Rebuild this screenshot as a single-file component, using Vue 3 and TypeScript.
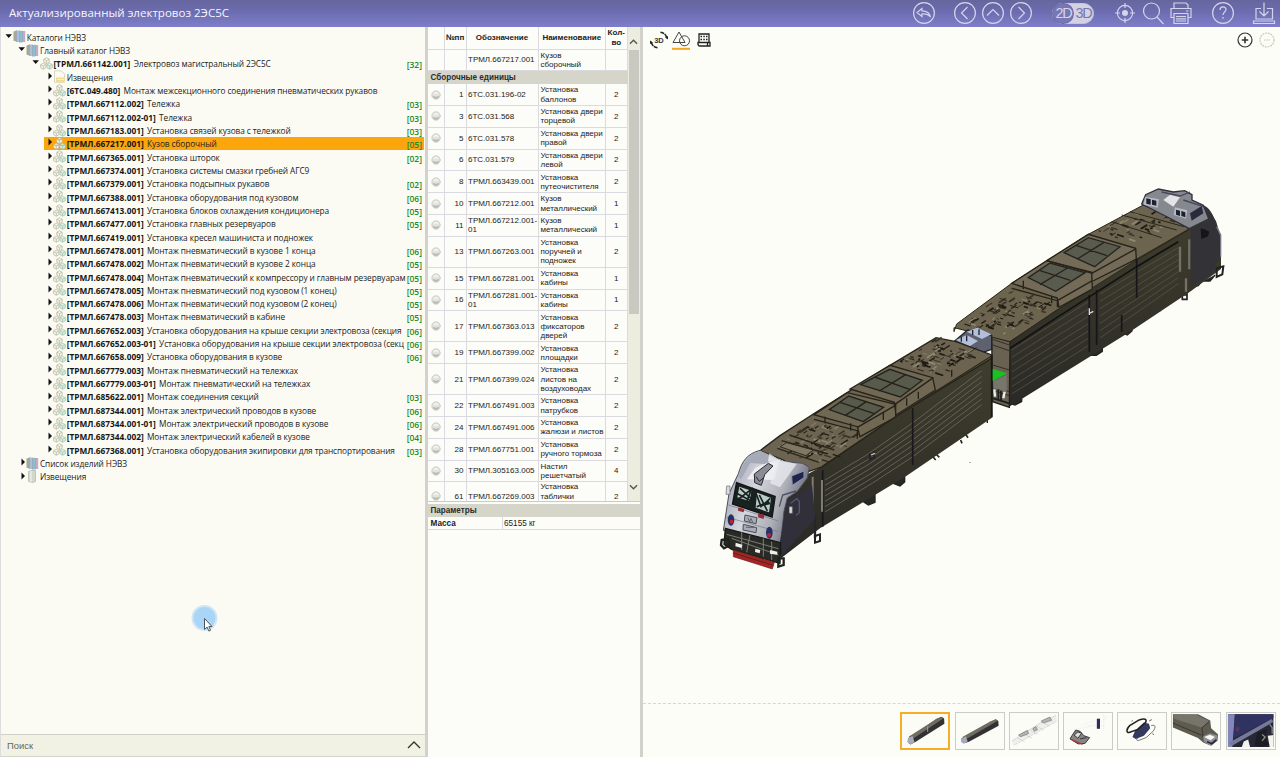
<script setup lang="ts">
type Kind = 'books' | 'cubes' | 'note' | 'book'
interface TreeRow { level: number; open?: boolean; kind: Kind; code?: string; name: string; count?: string; selected?: boolean }
interface Part { n: number; code: string; name: string; qty: number; h: number }
interface Stroke { d: string; c: string; w: number }

const leaf = (code: string, name: string, count = '', selected = false): TreeRow =>
  ({ level: 3, kind: 'cubes', code, name, count, selected })

const rows: TreeRow[] = [
  { level: 0, open: true, kind: 'books', name: 'Каталоги НЭВЗ' },
  { level: 1, open: true, kind: 'books', name: 'Главный каталог НЭВЗ' },
  { level: 2, open: true, kind: 'cubes', code: 'ТРМЛ.661142.001', name: 'Электровоз магистральный 2ЭС5С', count: '32' },
  { level: 3, kind: 'note', name: 'Извещения' },
  leaf('6ТС.049.480', 'Монтаж межсекционного соединения пневматических рукавов'),
  leaf('ТРМЛ.667112.002', 'Тележка', '03'),
  leaf('ТРМЛ.667112.002-01', 'Тележка', '03'),
  leaf('ТРМЛ.667183.001', 'Установка связей кузова с тележкой', '03'),
  leaf('ТРМЛ.667217.001', 'Кузов сборочный', '05', true),
  leaf('ТРМЛ.667365.001', 'Установка шторок', '02'),
  leaf('ТРМЛ.667374.001', 'Установка системы смазки гребней АГС9'),
  leaf('ТРМЛ.667379.001', 'Установка подсыпных рукавов', '02'),
  leaf('ТРМЛ.667388.001', 'Установка оборудования под кузовом', '06'),
  leaf('ТРМЛ.667413.001', 'Установка блоков охлаждения кондиционера', '05'),
  leaf('ТРМЛ.667477.001', 'Установка главных резервуаров', '05'),
  leaf('ТРМЛ.667419.001', 'Установка кресел машиниста и подножек'),
  leaf('ТРМЛ.667478.001', 'Монтаж пневматический в кузове 1 конца', '06'),
  leaf('ТРМЛ.667478.002', 'Монтаж пневматический в кузове 2 конца', '05'),
  leaf('ТРМЛ.667478.004', 'Монтаж пневматический к компрессору и главным резервуарам', '05'),
  leaf('ТРМЛ.667478.005', 'Монтаж пневматический под кузовом (1 конец)', '05'),
  leaf('ТРМЛ.667478.006', 'Монтаж пневматический под кузовом (2 конец)', '05'),
  leaf('ТРМЛ.667478.003', 'Монтаж пневматический в кабине', '05'),
  leaf('ТРМЛ.667652.003', 'Установка оборудования на крыше секции электровоза (секция', '06'),
  leaf('ТРМЛ.667652.003-01', 'Установка оборудования на крыше секции электровоза (секц', '06'),
  leaf('ТРМЛ.667658.009', 'Установка оборудования в кузове', '06'),
  leaf('ТРМЛ.667779.003', 'Монтаж пневматический на тележках'),
  leaf('ТРМЛ.667779.003-01', 'Монтаж пневматический на тележках'),
  leaf('ТРМЛ.685622.001', 'Монтаж соединения секций', '03'),
  leaf('ТРМЛ.687344.001', 'Монтаж электрический проводов в кузове', '06'),
  leaf('ТРМЛ.687344.001-01', 'Монтаж электрический проводов в кузове', '06'),
  leaf('ТРМЛ.687344.002', 'Монтаж электрический кабелей в кузове', '04'),
  leaf('ТРМЛ.667368.001', 'Установка оборудования экипировки для транспортирования', '03'),
  { level: 1, kind: 'books', name: 'Список изделий НЭВЗ' },
  { level: 1, kind: 'book', name: 'Извещения' },
]

const part = (n: number, code: string, name: string, qty: number, lines = 2): Part =>
  ({ n, code, name, qty, h: lines === 3 ? 31 : 21.8 })

const assembly = 'Кузов\nсборочный'
const parts: Part[] = [
  part(1, '6ТС.031.196-02', 'Установка\nбаллонов', 2),
  part(3, '6ТС.031.568', 'Установка двери\nторцевой', 2),
  part(5, '6ТС.031.578', 'Установка двери\nправой', 2),
  part(6, '6ТС.031.579', 'Установка двери\nлевой', 2),
  part(8, 'ТРМЛ.663439.001', 'Установка\nпутеочистителя', 2),
  part(10, 'ТРМЛ.667212.001', 'Кузов\nметаллический', 1),
  part(11, 'ТРМЛ.667212.001-\n01', 'Кузов\nметаллический', 1),
  part(13, 'ТРМЛ.667263.001', 'Установка\nпоручней и\nподножек', 2, 3),
  part(15, 'ТРМЛ.667281.001', 'Установка\nкабины', 1),
  part(16, 'ТРМЛ.667281.001-\n01', 'Установка\nкабины', 1),
  part(17, 'ТРМЛ.667363.013', 'Установка\nфиксаторов\nдверей', 2, 3),
  part(19, 'ТРМЛ.667399.002', 'Установка\nплощадки', 2),
  part(21, 'ТРМЛ.667399.024', 'Установка\nлистов на\nвоздуховодах', 2, 3),
  part(22, 'ТРМЛ.667491.003', 'Установка\nпатрубков', 2),
  part(24, 'ТРМЛ.667491.006', 'Установка\nжалюзи и листов', 2),
  part(28, 'ТРМЛ.667751.001', 'Установка\nручного тормоза', 2),
  part(30, 'ТРМЛ.305163.005', 'Настил\nрешетчатый', 4),
  { ...part(61, 'ТРМЛ.667269.003', 'Установка\nтаблички\n\u00a0', 2), h: 28 },
]

// Small fittings scattered over a slanted roof area spanned by two edge vectors.
function fittings(o: number[], u: number[], v: number[], count: number, seed: number): Stroke[] {
  let s = seed
  const rnd = () => (s = (s * 16807) % 2147483647) / 2147483647
  const out: Stroke[] = []
  const colors = ['#1d1b14', '#292619', '#3a3527', '#8f8873', '#1d1b14']
  for (let i = 0; i < count; i++) {
    const a = rnd(), b = rnd()
    const x = o[0] + u[0] * a + v[0] * b
    const y = o[1] + u[1] * a + v[1] * b
    const along = rnd() > 0.45
    const len = 6 + rnd() * 20
    const dx = along ? len * 0.84 : len * 0.94
    const dy = along ? -len * 0.54 : len * 0.3
    out.push({ d: `M${x.toFixed(1)} ${y.toFixed(1)}l${dx.toFixed(1)} ${dy.toFixed(1)}`, c: colors[Math.floor(rnd() * 5)], w: 2 + rnd() * 4 })
  }
  return out
}
const frontRoof = [
  ...fittings([215, 385], [125, -80], [140, 48], 85, 71),
  ...fittings([590, 130], [110, -70], [125, 35], 85, 19),
]
const rearRoof = [
  ...fittings([95, 430], [140, -95], [130, 38], 95, 33),
  ...fittings([500, 155], [130, -75], [110, 32], 45, 57),
]
const ribs = [0, 1, 2, 3, 4, 5, 6]
</script>

<template>
  <div class="app">
    <header class="top">
      <h1>Актуализированный электровоз 2ЭС5С</h1>
      <nav class="tools">
        <svg class="ic" viewBox="0 0 24 24"><circle cx="12" cy="12" r="10.4" /><path d="M10 7.500 5 11.500l5 4v-2.600c4-.400 6.500.600 8.500 3.100-.800-4-3.800-6.100-8.500-6.200z" /></svg>
        <svg class="ic g17" viewBox="0 0 24 24"><circle cx="12" cy="12" r="10.4" /><path d="m14.500 6-6 6 6 6" /></svg>
        <svg class="ic g4" viewBox="0 0 24 24"><circle cx="12" cy="12" r="10.4" /><path d="m6 14.500 6-6 6 6" /></svg>
        <svg class="ic g4" viewBox="0 0 24 24"><circle cx="12" cy="12" r="10.4" /><path d="m9.500 6 6 6-6 6" /></svg>
        <div class="toggle"><span class="two">2D</span><span class="three">3D</span></div>
        <svg class="ic g19" viewBox="0 0 24 24"><circle cx="12" cy="12" r="7.600" /><circle cx="12" cy="12" r="3" fill="#d4d4ea" stroke="none" /><path d="M12 2v5M12 17v5M2 12h5M17 12h5" /></svg>
        <svg class="ic g4" viewBox="0 0 24 24"><circle cx="10.500" cy="10" r="8" /><path d="m16 16 6.500 7" /></svg>
        <svg class="ic g4" viewBox="0 0 24 24"><path d="M5 7.500V2h12l2 2v3.500M5 16.500H2v-9h20v9h-3M5 12.500h14v10H5zM7 15.500h10M7 17.800h10M7 20h10M17 10h2.500" /></svg>
        <svg class="ic g17" viewBox="0 0 24 24"><circle cx="12" cy="12" r="10.4" /><path d="M9 9c0-4 6-4 6-.500 0 2.500-3 2.500-3 5.500M12 16v1.800" /></svg>
        <svg class="ic g17" viewBox="0 0 24 24"><path d="M9 7.500H4V18h16.500V7.500H15M12 1.500v13M7.500 10.500l4.500 4.500 4.500-4.500M1.500 20h21v2.500h-21z" /></svg>
      </nav>
    </header>

    <main class="body">
      <section class="left">
        <ul class="tree">
          <li v-for="(r, i) in rows" :key="i" class="row" :class="['l' + r.level, { sel: r.selected }]">
            <svg class="arrow" viewBox="0 0 9 10"><path :d="r.open ? 'M1.500 2.200h6.500L4.700 5.900z' : 'M4.500.500v7L8 4z'" /></svg>
            <svg v-if="r.kind === 'cubes'" class="kind" viewBox="0 0 13 13" fill="#f5f5e2" stroke="#b4b69f" stroke-width=".7">
              <path d="m6.500.700 2.700 1.500v3L6.500 6.700 3.800 5.200v-3zM3.800 2.200l2.700 1.300 2.700-1.300M6.500 3.500v3" />
              <path d="m3.300 6.200 2.700 1.500v3l-2.700 1.600L.6 10.700v-3zM.6 7.700 3.300 9 6 7.700M3.300 9v3" />
              <path d="m9.600 6.200 2.700 1.500v3l-2.700 1.600-2.700-1.600v-3zM6.900 7.700 9.600 9l2.700-1.300M9.600 9v3" fill="#d9efdf" stroke="#9cc0af" />
            </svg>
            <svg v-else-if="r.kind === 'books'" class="kind" viewBox="0 0 13 13">
              <path d="M.5 1.500 3.500.500v11l-3-.800z" fill="#a6a893" /><path d="M3.500.500h3v11.500h-3z" fill="#a9bfdc" /><path d="M6.500.800h3V12.500h-3z" fill="#85c3cc" /><path d="M9.500 1h2.700v11H9.500z" fill="#c7a9d0" /><path d="M3.500.500v11.500M6.500.800v11.700M9.500 1v11" stroke="#84879a" stroke-width=".5" />
            </svg>
            <svg v-else-if="r.kind === 'note'" class="kind" viewBox="0 0 13 13"><path d="M1.500.800h6.500l3.500 3v8.400h-10z" fill="#fbfaf0" stroke="#c5c5b7" stroke-width=".7" /><path d="M3 7.500h9v4.700H3z" fill="#f3dc8d" /><path d="M4 9.500h7" stroke="#fff8d0" stroke-width=".7" /></svg>
            <svg v-else class="kind" viewBox="0 0 13 13"><path d="M2.500 1.500 5 .5h4.500v11L7 12.500l-4.500-1z" fill="#d1d9cc" stroke="#a8ada2" stroke-width=".6" /><path d="M5 1v11" stroke="#fff" stroke-width=".8" /></svg>
            <span class="label"><b v-if="r.code">[{{ r.code }}]</b>{{ r.name }}</span>
            <span v-if="r.count" class="count">[{{ r.count }}]</span>
          </li>
        </ul>
        <div class="search"><span>Поиск</span><svg viewBox="0 0 14 8"><path d="m1 7 6-6 6 6" /></svg></div>
        <svg class="pointer" viewBox="0 0 28 28">
          <circle cx="13.500" cy="14" r="13" fill="#cfe6f3" /><circle cx="13.500" cy="14" r="11" fill="#abd5f6" />
          <path d="M13.500 14.500v11l2.600-2.400 1.800 4 1.700-.800-1.800-3.700h3.300z" fill="#fff" stroke="#3e4450" stroke-width=".9" />
        </svg>
      </section>

      <section class="mid">
        <div class="spec">
          <div class="grid">
            <div class="tr head"><span /><span>№пп</span><span>Обозначение</span><span>Наименование</span><span>Кол-<br>во</span></div>
            <div class="tr first"><span /><span /><span class="code">ТРМЛ.667217.001</span><span class="name">{{ assembly }}</span><span /></div>
            <div class="group">Сборочные единицы</div>
            <div v-for="p in parts" :key="p.n" class="tr" :style="{ height: p.h + 'px' }">
              <span class="gearcell"><svg viewBox="0 0 10 10"><circle cx="5" cy="5" r="4.200" fill="#e4e3dc" stroke="#bdbdb9" stroke-width=".9" stroke-dasharray="1.500 .700" /><path d="M1.500 5.500C3 7 7 7 8.500 5.500 8 8 6.500 8.800 5 8.800S2 8 1.500 5.500z" fill="#b9b9b7" /><path d="M2.800 3.500 5 2.500l2.200 1" stroke="#fff" fill="none" /></svg></span>
              <span class="num">{{ p.n }}</span><span class="code">{{ p.code }}</span><span class="name">{{ p.name }}</span><span class="qty">{{ p.qty }}</span>
            </div>
          </div>
          <div class="scroll">
            <svg viewBox="0 0 10 6"><path d="m1 5 4-4 4 4" /></svg>
            <i />
            <svg viewBox="0 0 10 6"><path d="m1 1 4 4 4-4" /></svg>
          </div>
        </div>
        <div class="params">
          <div class="group">Параметры</div>
          <div class="mass"><b>Масса</b><span>65155 кг</span></div>
        </div>
      </section>

      <section class="view">
        <div class="viewbar">
          <svg class="v1" viewBox="0 0 18 18"><path d="M10.500 1.200c3.500.600 5.600 2.600 6.300 6M7.500 16.800c-3.500-.600-5.600-2.600-6.300-6" fill="none" stroke="#222" stroke-width="1.500" stroke-dasharray="3.800 .700" /><path d="m15 6.500 3 2V5zM3 11.500l-3-2V13z" fill="#222" /><text x="9" y="11.700" text-anchor="middle">3D</text></svg>
          <svg class="v2" viewBox="0 0 18 20"><path d="M1 11.500 7 1l6 10.500z" /><circle cx="12.500" cy="9.800" r="5" /><path class="under" d="M0 17.800h18" /></svg>
          <svg class="v3" viewBox="0 0 14 14"><path d="M2 9.500V1h10v8.500M1 9.500h9.500V13H2.500C1 13 .8 11 1 9.500zM10.500 9.500H13V13h-2.500M3.500 3.500H5M6.300 3.500h1.500M9 3.500h1.500M3.500 6.500H5M6.300 6.500h1.500M9 6.500h1.500" /></svg>
          <div class="zoomers">
            <svg viewBox="0 0 16 16"><circle cx="8" cy="8" r="7" /><path d="M4.800 8h6.400M8 4.800v6.400" stroke-width="1.600" /></svg>
            <svg class="off" viewBox="0 0 16 16"><circle cx="8" cy="8" r="7" stroke-dasharray="2 .800" /><path d="M5 8h6" stroke-dasharray="1.500 .700" /></svg>
          </div>
        </div>

        <svg class="scene" viewBox="643 54 637 649">
          <defs>
            <linearGradient id="side" x1="0" y1="0" x2="0" y2="1"><stop offset="0" stop-color="#403e2d" /><stop offset="1" stop-color="#2a2926" /></linearGradient>
            <linearGradient id="cab" x1="0" y1="0" x2="1" y2=".4"><stop offset="0" stop-color="#8f93a0" /><stop offset=".45" stop-color="#d5d7de" /><stop offset=".75" stop-color="#aeb0b8" /><stop offset="1" stop-color="#68697a" /></linearGradient>
          </defs>

          <g transform="translate(930 180) scale(.33333)">
            <path d="M570 445v22l12-6 10 4 14-12v-20M485 508v18h14l18-12v-22M240 670l15 5 20-10v-25M690 382v12M785 320l20-3 10-14 25 0 15-18" fill="#2a2926" stroke="#222" stroke-width="4" />
            <path d="M757 330v28h14v-32M757 345h14" fill="none" stroke="#222" stroke-width="5" />
            <path d="m240 485 145-100 235-148 155-92 5-25 50-35 28 38 15 50v94l-93 68-180 120-365 227z" fill="url(#side)" />
            <path d="m185 468 55 17-2 197-50-17z" fill="#696152" stroke="#211f1a" stroke-width="4" />
            <path d="M188 478l50 17M188 495l50 17M188 555l50 15M190 620l48 15M190 632l48 15" stroke="#332f22" stroke-width="3" />
            <path d="m187 566 45 14-45 24z" fill="#16c31f" /><path d="M190 604l40-20v51l-40-12z" fill="#77766d" />
            <path d="M193 628l2 22M224 635l-4 20" stroke="#e9eee9" stroke-width="7" /><path d="M205 628v30M213 632v28M190 655l48 15" stroke="#1c1c1c" stroke-width="5" />
            <path d="m72 455 8-23 165-122 230-147 165-88 135 50v25l-155 90-235 148-145 97-168-42z" fill="#6d6450" stroke="#29261a" stroke-width="3" />
            <path v-for="(f, i) in rearRoof" :key="i" :d="f.d" :stroke="f.c" :stroke-width="f.w" />
            <path d="m245 310 105-68 135 35 2 50-100 55-5-28zM350 242l125-79 142 42 2 32-130 66" fill="#736a57" stroke="#25221a" stroke-width="4" />
            <path d="m295 293 65-44 105 29-88 56zM402 218l73-45 95 27-76 60z" fill="#595b4e" stroke="#252520" stroke-width="4" />
            <path d="m328 271 93 30M412 264l-82 50M438 196l93 31M522 187l-80 50M245 325l137 37v20M382 362l105-60M350 242l137 38M485 280l130-72M280 302v25M365 348v22" fill="none" stroke="#28241b" stroke-width="4" />
            <path d="m575 105 165 45M600 95l162 45M545 125l150 48M240 485l145-98M615 240l160-92" stroke="#2a261c" stroke-width="3" />
            <path d="m75 482 38-32 72 16v42l-55 19z" fill="#5e6270" stroke="#24242a" stroke-width="4" />
            <path d="m78 480 32-15 34 18-25 16zM110 455l32-12 42 20-28 14z" fill="#b4bfdb" /><path d="M94 470v15M110 466v18M128 450v15M147 448v17" stroke="#22252f" stroke-width="4" />
            <g stroke="#5c5a50" stroke-width="2" fill="none">
              <path v-for="i in ribs" :key="i" :d="`M245 ${510 + i * 22}L475 ${365 + i * 22}M510 ${342 + i * 22}L745 ${203 + i * 18}`" />
            </g>
            <path d="M620 238v115M478 345v170M500 330v165M575 405v50" stroke="#15151a" stroke-width="5" /><path d="M750 200v75M778 178v90M768 295v40" stroke="#747066" stroke-width="7" />
            <path d="M478 400l12-6M478 385v20" stroke="#d6d8dd" stroke-width="4" />
            <path d="m240 505 145-95 235-150 125-75" stroke="#111" stroke-width="5" fill="none" />
            <path d="m635 72 12-28 38-17 45 9 34-4 22 12v16l34 16 18 45-60 25-60-32z" fill="#85888f" stroke="#2f303b" stroke-width="4" />
            <path d="M820 76c33 12 52 80 52 150l-30 60-60 30V142l55-28z" fill="#333237" /><path d="m780 100 35-22 5 22-35 22z" fill="#292b3d" />
            <path d="m645 50 42 8-4 25-42-9zM735 82l37 9-4 25-37-11z" fill="#b6bac2" /><path d="m649 55 13 3v16l-13-3zM666 59l13 3v15l-13-3zM738 89l12 3v16l-12-4zM754 93l12 4v15l-12-4z" fill="#1c2030" />
            <path d="M700 60l30 20 20-28-30-8z" fill="#e3e4e8" /><path d="M695 36l55 12 30-12M760 60l60 20" stroke="#454859" stroke-width="4" fill="none" />
            <path d="m812 145 14 4 12 6-4 14-20 8z" fill="#151518" /><path d="M860 140l12 25v65" stroke="#777987" stroke-width="4" fill="none" /><path d="M860 265l20-6-3 24-17 8z" fill="none" stroke="#222" stroke-width="6" />
          </g>

          <g transform="translate(700 320) scale(.33333)">
            <path d="M490 545l15 10 20-8v-32l-30 12zM580 490l20 8 14-12v-30l-28 18zM862 297v12" fill="#292827" stroke="#222" stroke-width="4" />
            <path d="M697 408l10 12M708 402l10 10M782 360l4 10M797 343l7 10" stroke="#222" stroke-width="5" />
            <path d="m300 475 68-37 222-150 285-183 3 187-258 175-260 158-117 90-10-150z" fill="url(#side)" />
            <path d="m180 392 60-45 100-65 230-146 138-83 60 12 107 40v10L590 288 368 440l-58 20-60-40z" fill="#6c6350" stroke="#25231a" stroke-width="4" />
            <path v-for="(f, i) in frontRoof" :key="i" :d="f.d" :stroke="f.c" :stroke-width="f.w" />
            <path d="m342 284 100-66 145 35v38L480 350l-8-30zM450 207l120-71 128 37 8 37-118 75-5-38z" fill="#716854" stroke="#28241b" stroke-width="4" />
            <path d="m388 269 58-41 105 34-61 43zM482 194l87-46 98 33-66 50z" fill="#585a4c" stroke="#23231d" stroke-width="4" />
            <path d="m420 247 103 34M499 245l-64 42M524 171l105 37M617 164l-79 49M342 298l130 34v24M472 322l113-65M700 173l-115 80M375 290v20M452 310v22M550 275v25M620 235v22M655 215v22M755 150v20" fill="none" stroke="#25221a" stroke-width="4" />
            <path d="m245 362 120 34M268 345l135 45M232 385l125 42M368 438l222-150 285-180" fill="none" stroke="#2b271c" stroke-width="4" />
            <path d="m240 380 20-12 80 22-22 17z" fill="#817763" stroke="#302c20" stroke-width="3" />
            <g stroke="#6b6a5f" stroke-width="2.5" fill="none">
              <path v-for="i in ribs" :key="i" :d="`M375 ${480 + i * 16}L${500 + i * 3} ${405 + i * 14}L640 ${307 + i * 17}L845 ${152 + i * 17}`" />
            </g>
            <path d="M638 265v170M875 105v185M368 450v170" stroke="#17171d" stroke-width="5" /><path d="M338 470v110M366 480v95" stroke="#7d7b76" stroke-width="6" /><path d="M345 585v70M510 400v18l12-5v-20" stroke="#26252a" stroke-width="7" fill="none" /><path d="M513 405l12-5" stroke="#c8c9ce" stroke-width="4" />
            <path d="M345 648l15-5v20l-15 5z" fill="none" stroke="#222" stroke-width="6" />
            <path d="M180 391c-38 10-54 32-65 70l-28 60-17 110 172 38 10-95 10-40 30-20 30-40 6-32-20-12-60-6z" fill="url(#cab)" stroke="#4c4e5d" stroke-width="3" />
            <path d="m180 393 28 12-5 28-52-4-28 48-8-6c15-44 28-67 65-78z" fill="#a7abb8" /><path d="m203 428 37-10-17 62-82-2 25-35z" fill="#eceef2" />
            <path d="m208 400 30 20 52 12-50 70-30-12 22-60-28-8z" fill="#e6e8ee" opacity=".8" />
            <path d="m163 462 42-32 14 8-25 26-10 32-20-8z" fill="#8a8c96" stroke="#292a34" stroke-width="3" /><path d="m168 470 10 14 12-10" fill="none" stroke="#26272e" stroke-width="3" />
            <path d="m275 468 37-15v20l-35 23z" fill="#20264b" stroke="#8f94ae" stroke-width="3" />
            <path d="m262 540 32-18 42-28 10 100-98 110-8-40z" fill="#31303a" /><path d="M238 560l10-35 40-12" stroke="#4d5062" stroke-width="4" fill="none" />
            <path d="m110 488 115 42-9 61-118-39z" fill="#1a2220" stroke="#15171a" stroke-width="5" />
            <path d="m118 500 36 12-5 32-37-12zM171 518l42 16-6 43-40-14z" fill="#b9cbc8" /><path d="m112 540 42-32-15 40M120 505l38 35M110 520l42 22M168 520l15 40 28-25M170 560l38-15M178 525l24 48M190 555l20-5M165 508l-5 55" stroke="#17221f" stroke-width="5" fill="none" />
            <path d="m272 550 18-14 8 8v34l-10 8" fill="none" stroke="#55576a" stroke-width="4" /><path d="M268 560h9v20h-9M80 498h10v25H78z" fill="#d8dae0" stroke="#666" stroke-width="2" />
            <path d="M75 590l160 45M85 555l150 48" stroke="#737789" stroke-width="2" /><path d="m115 562 18 5-2 10-17-5zM175 580l18 5-2 12-17-5z" fill="#912f35" />
            <path d="m135 585 36 8-3 18-35-8zM130 613l40 10-2 15-39-8z" fill="#a9acb6" stroke="#4b4d58" stroke-width="3" /><path d="m143 593 6 12 4-10 5 12M138 622h24" fill="none" stroke="#444" stroke-width="2" />
            <ellipse cx="93" cy="600" rx="10" ry="17" fill="#272f65" /><ellipse cx="208" cy="638" rx="10" ry="18" fill="#272f65" /><circle cx="95" cy="605" r="6" fill="#b42636" /><circle cx="207" cy="645" r="6" fill="#b42636" />
            <path d="m76 625 166 43-2 62-145-42-23-15z" fill="#292a26" stroke="#171916" stroke-width="4" /><path d="m80 643 155 43M95 655l140 50M125 635v55M190 655v55M215 665v55M150 645l-10 52" stroke="#797e72" stroke-width="3" /><path d="m107 668 20 6-2 10-19-5zM166 686l15 4-2 10-14-4zM210 690l22 5v9l-22-3z" fill="#edf0eb" />
            <path d="m100 690 123 37-6 20-117-37z" fill="#a52525" stroke="#642020" stroke-width="2" /><path d="M100 699l120 37" stroke="#611e1e" stroke-width="3" /><path d="m65 660 20-3 2 20-15 8-9-10zM235 715h16v20l-16 5z" fill="none" stroke="#20221e" stroke-width="7" />
          </g>
          <circle cx="970" cy="462.500" r=".6" fill="#555" />
        </svg>

        <div class="strip">
          <div class="thumb on"><svg viewBox="0 0 150 114"><path d="m18 82 96-66 16-7 9 6 1 18-96 60-18 9-9-8z" fill="#333136" /><path d="m20 76 95-60 16-6 4 6-102 68z" fill="#706c60" /><path d="m18 82 15-8 7 20-13 8-9-6z" fill="#a6acbd" /><path d="M84 42v18" stroke="#aaa" stroke-width="3" /></svg></div>
          <div class="thumb"><svg viewBox="0 0 150 114"><path d="m17 80 90-51 18-9 8 5 1 15-94 51-16 5-8-6z" fill="#333136" /><path d="m19 76 90-50 16-6 5 5-98 57z" fill="#706c60" /><path d="m16 82 14-8 6 16-13 7-8-6z" fill="#a6acbd" /></svg></div>
          <div class="thumb"><svg viewBox="0 0 150 114"><path d="m5 88 100-65 40-15 3 16L45 82 8 102z" fill="#eeeeec" /><path d="m6 88 100-63 40-18M12 102 60 75l88-50M25 80l22 12M45 68l24 12M65 56l22 12M84 42l22 13M105 30l20 12" stroke="#b8b8b8" stroke-width="2" stroke-dasharray="4 2" /><path d="m26 70 28-15 4 10-25 10zM71 50l10-7 5 10-10 5zM98 25l27-12 6 10-27 9z" fill="#b4b5b3" stroke="#707070" stroke-width="2" /></svg></div>
          <div class="thumb"><svg viewBox="0 0 150 114"><path d="m60 38 35-15M110 30l30-20M75 40h55M30 52l55-10M125 5v55" stroke="#deded9" stroke-width="2" stroke-dasharray="3 4" /><path d="M103 18h10v32h-10z" fill="#2c2e55" /><path d="m24 72 12-18 14 4 12 14 18 6-14 18-22 2-26-16z" fill="#868686" stroke="#343434" stroke-width="3" /><path d="m31 70 12-10 12 4-12 16zM50 82l20-4" fill="#ddd" stroke="#333" stroke-width="3" /><path d="m25 83 33 14v4l-34-14z" fill="#b23636" /></svg></div>
          <div class="thumb"><svg viewBox="0 0 150 114"><path d="m45 76 8-20 28-26 16 4 4 14-20 24-26 10z" fill="#34395f" /><path d="M34 62c-10 0-8-12 2-22l30-18c18-6 26-2 20 8L62 52 34 62" fill="none" stroke="#222" stroke-width="5" /><path d="m104 40c14-4 16 4 6 18L88 78l-24 9c-8 1-8-4 0-9" fill="none" stroke="#555" stroke-width="2.500" /><path d="M42 26l4-2M98 25l8-4M108 66l5 2" stroke="#555" stroke-width="3" /></svg></div>
          <div class="thumb"><svg viewBox="0 0 150 114"><path d="M2 4h80l38 20 3 24 22 20-2 20-20 16-24-10-18-15L2 46z" fill="#5e5c50" /><path d="m2 4 75 2 40 20-24 20L5 18z" fill="#77756a" /><path d="m94 47 23-20M2 32l90 38M94 47l3 30" stroke="#363630" stroke-width="3" /><path d="m98 74 21-10 24 7-4 18-20 13-19-10z" fill="#8e8f92" /><path d="m101 76 18-7 16 7-14 10z" fill="#f7f7f5" /><path d="m110 91 15 6 14-12" stroke="#22234a" stroke-width="5" fill="none" /></svg></div>
          <div class="thumb"><svg viewBox="0 0 150 114"><path d="M2 4h144v104H2z" fill="#262838" /><path d="M2 4h22l-8 104H2z" fill="#8286ba" /><path d="M24 4h122v12L20 80z" fill="#303362" /><path d="m52 90 14-6 6 24H46zM128 72l18-2v38h-12z" fill="#f4f4ee" /><path d="m5 94 135-75 6 9L15 104z" fill="#767a98" /><path d="m95 62 32-12-6 30 12 20-25 8-22-5z" fill="#1c1e23" /><path d="m110 68 10 8-10 12M134 36l8 10v20" stroke="#8b8b88" stroke-width="4" fill="none" /><path d="M28 43l12 4-5 12-10-3z" fill="#5d3558" /></svg></div>
        </div>
      </section>
    </main>
  </div>
</template>

<style>
html, body { margin: 0; overflow: hidden; }
</style>

<style scoped>
.app { width: 1280px; height: 757px; display: flex; flex-direction: column; overflow: hidden; background: #fcfcf8; color: #222; font-family: "Liberation Sans", Arial, sans-serif; box-sizing: border-box; }
.app *, .app *::before { box-sizing: border-box; }
.top { height: 26.5px; flex: none; display: flex; align-items: center; justify-content: space-between; padding: 0 4px 0 9px; background: linear-gradient(#66669e, #6c6db0 45%, #7e7ecb); }
h1 { margin: 0; font: 400 11.55px/26px "Open Sans", "Noto Sans", sans-serif; color: #f6f6fc; white-space: nowrap; }
.tools { display: flex; align-items: center; height: 25px; }
.ic { width: 24px; height: 24px; fill: none; stroke: #d4d4ea; stroke-width: 1.2; flex: none; }
.g4 { margin-left: 4px; }
.g17 { margin-left: 17.3px; }
.g19 { margin-left: 19px; }
.toggle { width: 42px; height: 21px; margin-left: 19.3px; border-radius: 11px; background: #d2d2e4; border: 1px solid #c4c4df; display: flex; font: 14.5px/19px "Liberation Sans", sans-serif; letter-spacing: -1.4px; }
.toggle span { width: 20px; text-align: center; }
.two { border-radius: 10px; background: #7677b4; color: #d4d4ea; box-shadow: 0 0 0 1px #6c6da8; }
.three { color: #7879ad; }

.body { flex: 1; min-height: 0; display: flex; }
.left { position: relative; width: 428px; display: flex; flex-direction: column; border-right: 3px solid #d2d2ca; border-left: 1px solid #dddde0; background: #fbfbf4; }
.tree { flex: 1; margin: 0; padding: 3.6px 1.5px 0 3px; list-style: none; overflow: hidden; font: 8.3px/13.333px "Open Sans", "Noto Sans", sans-serif; }
.row { height: 13.333px; display: flex; align-items: center; white-space: nowrap; }
.l1 { margin-left: 13.3px; }
.l2 { margin-left: 26.7px; }
.l3 { margin-left: 40px; }
.sel { background: #fda50c; }
.arrow { width: 9px; height: 10px; flex: none; fill: #111; }
.kind { width: 13px; height: 13px; flex: none; }
.label { flex: 1; min-width: 0; margin: 1px 0 0 .7px; color: #222; letter-spacing: -.09px; }
.label b { margin-right: 3.3px; color: #161616; letter-spacing: 0; }
.count { width: 17px; flex: none; text-align: right; padding: 3px 1.5px 0 0; color: #218a2d; font-weight: 600; font-size: 8.5px; }
.search { height: 23.5px; flex: none; display: flex; align-items: center; justify-content: space-between; padding: 0 4px 0 6px; border-top: 1px solid #d0d0c9; border-bottom: 1px solid #d4d4cc; background: #f2f2e4; color: #66665f; font-size: 9.4px; }
.search svg { width: 14px; height: 8px; fill: none; stroke: #333; stroke-width: 1.3; }
.pointer { position: absolute; left: 190px; top: 577px; width: 28px; height: 28px; }

.mid { width: 215px; flex: none; border-right: 3px solid #d2d2ca; display: flex; flex-direction: column; font-size: 8px; line-height: 9.2px; }
.spec { height: 475px; display: flex; overflow: hidden; border-bottom: 1px solid #cacac6; flex: none; }
.grid { width: 199.5px; height: 474px; overflow: hidden; flex: none; }
.tr { display: grid; grid-template-columns: 16.5px 22px 72px 67.5px 21.5px; height: 21.3px; border-bottom: 1px solid #dadae0; }
.tr span { display: flex; align-items: center; border-right: 1px solid #dadae0; white-space: pre; color: #222; }
.head { height: 23.2px; font-weight: bold; }
.head span, .qty { justify-content: center; text-align: center; }
.num { justify-content: flex-end; padding-right: 2px; }
.code { padding-left: 1.5px; }
.name { padding-left: 2px; }
.gearcell { justify-content: center; }
.gearcell svg { width: 10px; height: 10px; }
.group { height: 13.2px; padding-left: 2.5px; font-size: 8.15px; line-height: 14px; font-weight: bold; background: #d5d5c9; color: #2c2c2c; white-space: nowrap; }
.scroll { width: 12.5px; display: flex; flex-direction: column; align-items: center; padding: 12px 0 11px; background: #ededdf; flex: none; }
.scroll svg { width: 9px; height: 6px; fill: none; stroke: #555; stroke-width: 1.5; flex: none; }
.scroll i { width: 10px; height: 264px; margin: 5px 0 auto; background: #c9c9c2; }
.params { padding-top: 2px; }
.mass { height: 13.5px; display: flex; line-height: 14px; border-bottom: 1px solid #d9d9e4; font-size: 8.2px; }
.mass b { width: 74.5px; padding-left: 2.5px; border-right: 1px solid #d9d9e4; }
.mass span { padding-left: 1.5px; }

.view { flex: 1; min-width: 0; display: flex; flex-direction: column; background: #fdfdf7; }
.viewbar { height: 27.5px; flex: none; display: flex; align-items: flex-start; padding: 4.5px 5px 0 7px; }
.v1 { width: 18px; height: 18px; }
.v1 text { font: bold 7.5px "Liberation Sans", sans-serif; fill: #333; }
.v2 { width: 18px; height: 20px; margin-left: 4px; fill: none; stroke: #444; stroke-width: 1; }
.v2 .under { stroke: #f3a51e; stroke-width: 2; }
.v3 { width: 14px; height: 14px; margin: 1.5px 0 0 7px; fill: none; stroke: #222; stroke-width: 1.3; }
.zoomers { margin-left: auto; display: flex; gap: 6.5px; padding-top: 1px; }
.zoomers svg { width: 16px; height: 16px; fill: none; stroke: #333; stroke-width: 1.2; }
.zoomers .off { stroke: #c8c8bc; }
.scene { width: 637px; height: 649px; flex: none; fill: none; }
.strip { flex: 1; display: flex; justify-content: flex-end; gap: 4.2px; padding: 8px 4.5px 0 0; border-top: 1px dashed #d4d4e8; }
.thumb { width: 50px; height: 38px; border: 1px solid #cbcbc8; background: #fcfcf6; flex: none; }
.thumb svg { display: block; width: 100%; height: 100%; fill: none; }
.thumb.on { border: 2px solid #f4ae27; }
</style>
